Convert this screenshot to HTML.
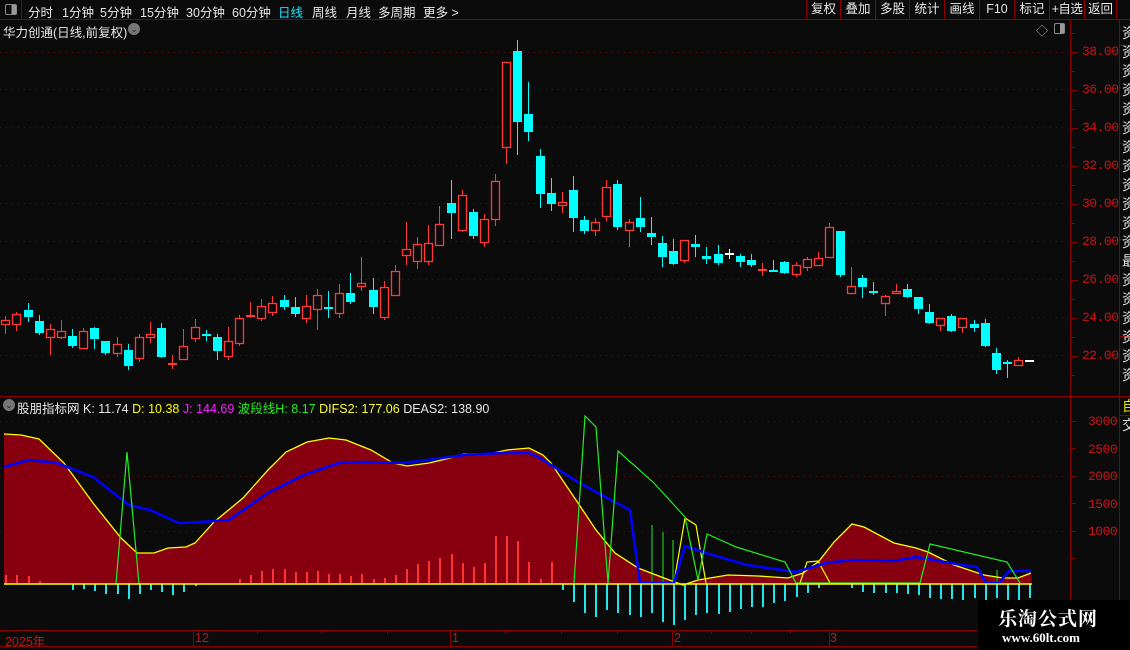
<!DOCTYPE html>
<html><head><meta charset="utf-8"><style>
*{margin:0;padding:0;box-sizing:border-box}
body{width:1130px;height:650px;background:#0b0b0b;overflow:hidden;position:relative;font-family:"Liberation Sans","Noto Sans CJK SC",sans-serif;font-size:12px;color:#e6e6e6}
.a{position:absolute;white-space:nowrap}
#top{position:absolute;left:0;top:0;width:1130px;height:20px;border-bottom:1px solid #8a0000}
.m{position:absolute;top:2px;font-size:12.5px;color:#e8e8e8;white-space:nowrap}
.b{position:absolute;top:0;height:19px;border-left:1px solid #8a0000;font-size:12.5px;color:#e8e8e8;text-align:center;line-height:19px;white-space:nowrap;overflow:hidden}
.yl{position:absolute;left:1082px;color:#c81418;font-size:13px;font-family:"Liberation Mono",monospace;letter-spacing:-0.5px}
.rc{position:absolute;left:1122px;width:8px;color:#e0e0e0;font-size:14px;line-height:19px;overflow:hidden;word-break:break-all}
</style></head><body>
<div id="top">
 <div class="a" style="left:0;top:0;width:22px;height:20px;border-right:1px solid #8a0000"></div>
 <div class="a" style="left:5px;top:4px;width:12px;height:11px;border:1px solid #888;border-radius:2px;background:linear-gradient(90deg,#0b0b0b 55%,#999 55%)"></div>
 <span class="m" style="left:28px">分时</span>
 <span class="m" style="left:62px">1分钟</span>
 <span class="m" style="left:100px">5分钟</span>
 <span class="m" style="left:140px">15分钟</span>
 <span class="m" style="left:186px">30分钟</span>
 <span class="m" style="left:232px">60分钟</span>
 <span class="m" style="left:278px;color:#19e6ff">日线</span>
 <span class="m" style="left:312px">周线</span>
 <span class="m" style="left:346px">月线</span>
 <span class="m" style="left:378px">多周期</span>
 <span class="m" style="left:423px">更多 &gt;</span>
 <div class="b" style="left:806px;width:34px">复权</div>
 <div class="b" style="left:840px;width:35px">叠加</div>
 <div class="b" style="left:875px;width:34px">多股</div>
 <div class="b" style="left:909px;width:35px">统计</div>
 <div class="b" style="left:944px;width:35px">画线</div>
 <div class="b" style="left:979px;width:35px">F10</div>
 <div class="b" style="left:1014px;width:35px">标记</div>
 <div class="b" style="left:1049px;width:35px;letter-spacing:-0.5px">+自选</div>
 <div class="b" style="left:1084px;width:33px;border-right:1px solid #8a0000">返回</div>
</div>
<div class="a" style="left:3px;top:22px;font-size:12.5px">华力创通(日线,前复权)</div>
<div class="a" style="left:128px;top:23px;width:12px;height:12px;border-radius:50%;background:#777;color:#222;font-size:9px;line-height:12px;text-align:center">⌄</div>
<div class="a" style="left:1036px;top:22px;color:#aaa;font-size:12px">◇</div>
<div class="a" style="left:1054px;top:23px;width:11px;height:11px;border:1px solid #888;border-radius:2px;background:linear-gradient(90deg,#0b0b0b 55%,#999 55%)"></div>

<div class="a" style="left:3px;top:399px;width:12px;height:12px;border-radius:50%;background:#777;color:#222;font-size:9px;line-height:12px;text-align:center">⌄</div>
<div class="a" style="left:17px;top:398px;font-size:12.5px"><span>股朋指标网</span> <span>K: 11.74</span> <span style="color:#ffff00">D: 10.38</span> <span style="color:#ff22ff">J: 144.69</span> <span style="color:#22ee22">波段线H: 8.17</span> <span style="color:#ffff33">DIFS2: 177.06</span> <span>DEAS2: 138.90</span></div>

<svg class="a" style="left:0;top:0" width="1130" height="650" id="g">
 <g stroke="#5a0a0a" stroke-dasharray="1,5" stroke-width="1" id="grid"></g>
 <line x1="1070.5" y1="20" x2="1070.5" y2="650" stroke="#8a0000"/>
 <line x1="1119.5" y1="20" x2="1119.5" y2="650" stroke="#8a0000"/>
 <g stroke="#8a0000"><line x1="1120" y1="45.5" x2="1130" y2="45.5"/><line x1="1120" y1="143.5" x2="1130" y2="143.5"/><line x1="1120" y1="239.5" x2="1130" y2="239.5"/><line x1="1120" y1="336.5" x2="1130" y2="336.5"/><line x1="1120" y1="415.5" x2="1130" y2="415.5"/></g>
 <line x1="0" y1="396.5" x2="1130" y2="396.5" stroke="#8a0000"/>
 <line x1="0" y1="630.5" x2="1119" y2="630.5" stroke="#8a0000"/>
 <line x1="0" y1="646.5" x2="1119" y2="646.5" stroke="#8a0000"/>
 <g id="ticks" stroke="#8a0000"></g>
 <polygon id="fill" fill="#880010"/>
 <g id="bars"></g>
 <polyline id="yel" fill="none" stroke="#ffff00" stroke-width="1.3"/>
 <polyline fill="none" stroke="#ffff00" stroke-width="1.2" points="674,582 685,518 696,525 706,583"/>
 <polyline fill="none" stroke="#ffff00" stroke-width="1.2" points="800,583 807,562 818,561 830,583"/>
 <polyline id="blue" fill="none" stroke="#0000ff" stroke-width="2.6"/>
 <polyline id="grn" fill="none" stroke="#22ee22" stroke-width="1.2"/>
 <polyline fill="none" stroke="#22ee22" stroke-width="1.2" points="116,584 127,452 139,584"/>
 <line x1="4" y1="584" x2="1032" y2="584" stroke="#ffff00" stroke-width="1.6"/>
 <g id="cdl"></g>
</svg>
<div id="yls"></div>
<div class="a" style="left:5px;top:631px;color:#c81418;font-size:12.5px">2025年</div>
<div class="a" style="left:195px;top:631px;color:#c81418;font-size:12.5px">12</div>
<div class="a" style="left:452px;top:631px;color:#c81418;font-size:12.5px">1</div>
<div class="a" style="left:674px;top:631px;color:#c81418;font-size:12.5px">2</div>
<div class="a" style="left:830px;top:631px;color:#c81418;font-size:12.5px">3</div>
<div class="rc" style="top:24px;height:360px">资资资资资资资资资资资资最资资资资资资资资资</div>
<div class="rc" style="top:397px;color:#e6e600">自</div>
<div class="rc" style="top:416px">交</div>
<div class="a" style="left:978px;top:600px;width:152px;height:50px;background:#000"></div>
<div class="a" style="left:998px;top:604px;color:#fff;font-family:'Noto Serif CJK SC','Liberation Serif',serif;font-weight:bold;font-size:19px;letter-spacing:1px">乐淘公式网</div>
<div class="a" style="left:1002px;top:630px;color:#fff;font-family:'Liberation Serif',serif;font-weight:bold;font-size:13px">www.60lt.com</div>
<script>
var NS="http://www.w3.org/2000/svg";
function el(p,t,a){var e=document.createElementNS(NS,t);for(var k in a)e.setAttribute(k,a[k]);p.appendChild(e);return e;}
var grid=document.getElementById('grid');
[52,89,127,165,203,241,279,317,355,421,476,531].forEach(function(y){el(grid,'line',{x1:0,y1:y+.5,x2:1066,y2:y+.5});});
var ticks=document.getElementById('ticks');
for(var y=33;y<390;y+=19){el(ticks,'line',{x1:1070,y1:y+.5,x2:(Math.abs((y-52)%38)<1?1078:1075),y2:y+.5});}
[421,448,476,503,531,558].forEach(function(y){el(ticks,'line',{x1:1070,y1:y+.5,x2:1076,y2:y+.5});});
[193,450,672,829].forEach(function(x){el(ticks,'line',{x1:x+.5,y1:630,x2:x+.5,y2:646});});
[257,322,387,506,561,617,711,751,790].forEach(function(x){el(ticks,'line',{x1:x+.5,y1:630,x2:x+.5,y2:634});});
var yls=document.getElementById('yls'),h='';
['38.00','36.00','34.00','32.00','30.00','28.00','26.00','24.00','22.00'].forEach(function(t,i){h+='<div class="yl" style="top:'+(44+i*38)+'px">'+t+'</div>';});
['3000','2500','2000','1500','1000'].forEach(function(t,i){h+='<div class="yl" style="left:1088px;top:'+(414+i*27.5)+'px">'+t+'</div>';});
yls.innerHTML=h;
var yel="4,434 21,435 39,439 64,463 93,503 121,538 137,553 154,553 168,548 186,547 195,543 214,522 243,498 268,470 286,452 307,442 329,438 346,440 371,450 393,463 407,466 429,463 450,458 464,454 489,454 507,450 529,448 543,455 551,463 578,503 596,530 615,553 638,568 664,578 683,585 698,580 728,575 758,576 788,578 803,573 819,561 834,542 852,524 864,527 894,543 916,548 928,552 954,565 984,575 1003,578 1018,578 1031,573";
document.getElementById('yel').setAttribute('points',yel);
document.getElementById('fill').setAttribute('points',"4,584 "+yel+" 1031,584");
document.getElementById('blue').setAttribute('points',"4,467 29,460 57,463 93,477 129,505 150,510 179,523 200,522 229,520 268,493 304,475 339,463 364,462 404,463 464,455 500,453 529,453 540,458 578,482 596,492 630,510 640,583 674,583 685,546 706,553 747,565 796,572 826,563 852,560 894,561 916,557 962,565 977,567 986,583 999,583 1009,571 1031,571");
document.getElementById('grn').setAttribute('points',"574,583 585,416 596,427 608,583 618,451 653,482 685,517 698,580 707,534 736,547 785,562 796,583 920,583 930,544 1007,562 1020,583");
function X(i){return 5.3+11.13*i;}
var bars=document.getElementById('bars');
function bar(i,y,c){var x=Math.round(X(i));el(bars,'rect',{x:x,y:Math.min(y,584),width:2,height:Math.abs(584-y),fill:c});}
[575,575,576,581].forEach(function(y,i){bar(i,y,'#ff3333');});
[579,575,571,569,569,572,572,571,574,574,576,574,579,578,575,569,564,561,558,554,563,567,563,536,536,541,562,579,562].forEach(function(y,i){bar(21+i,y,'#ff3333');});
[590,589,591,594,594,599,594,590,592,595,592,586].forEach(function(y,i){bar(6+i,y,'#22e6ee');});
[590,602,613,617,610,613,615,617,613,622,625,620,615,613,614,612,609,607,607,603,601,597,593,588].forEach(function(y,i){bar(50+i,y,'#22e6ee');});
[588,592,593,593,593,594,595,598,599,599,600,598,600,598,600,600,598].forEach(function(y,i){bar(76+i,y,'#22e6ee');});
[[651,525],[662,532],[672,540],[996,570]].forEach(function(p){el(bars,'rect',{x:p[0],y:p[1],width:2,height:584-p[1],fill:'#1a7a1a'});});
var D=[
['r',320,324,316,333],['r',314,324,312,330],['c',310,317,303,321],['c',321,333,315,334],['r',329,337,324,354],['r',331,337,320,338],['c',336,346,329,347],['r',331,348,328,348],['c',328,339,327,348],['c',341,353,341,354],
['r',344,353,337,356],['c',350,366,344,369],['r',337,358,334,361],['r',334,337,322,342],['c',328,357,323,357],['r',363,363,355,368],['r',346,359,329,359],['r',327,338,319,341],['c',334,334,330,340],['c',337,351,334,359],
['r',341,356,327,359],['r',318,343,315,345],['r',315,315,302,317],['r',306,318,299,320],['r',303,312,296,315],['c',300,307,295,309],['c',307,314,297,316],['r',306,318,295,322],['r',295,309,289,329],['c',307,307,291,317],
['r',293,313,284,317],['c',293,302,273,303],['r',283,286,257,290],['c',290,307,278,313],['r',287,317,281,319],['r',271,295,265,295],['r',249,255,222,264],['r',244,261,237,268],['r',243,261,225,264],['r',224,245,206,245],
['c',203,213,180,238],['r',195,230,190,231],['c',212,236,209,238],['r',219,242,214,246],['r',181,219,174,225],['r',62,147,62,163],['c',51,122,40,154],['c',114,132,82,140],['c',156,194,149,207],['c',193,204,178,210],
['r',202,205,192,212],['c',190,218,176,231],['c',220,231,216,233],['r',222,230,218,235],['r',187,216,180,220],['c',184,227,180,229],['r',222,230,219,246],['c',218,227,197,231],['c',233,237,217,244],['c',243,257,236,266],
['c',251,264,239,264],['r',240,260,240,262],['c',244,247,235,256],['c',256,259,247,263],['c',254,263,245,264],['w',253,253,249,258],['c',256,262,254,266],['c',260,265,254,266],['r',269,269,263,275],['c',270,271,260,271],
['c',262,273,261,273],['r',265,274,262,276],['r',259,267,257,270],['r',258,265,252,265],['r',227,257,223,257],['c',231,275,231,276],['r',286,293,267,293],['c',278,287,275,297],['c',291,293,282,294],['r',296,303,295,315],
['r',291,293,284,293],['c',289,297,284,297],['c',297,309,297,313],['c',312,323,304,323],['r',318,325,318,330],['c',316,331,314,331],['r',318,327,318,332],['c',324,328,320,331],['c',323,346,319,346],['c',353,370,348,373],
['c',362,364,360,377],['r',360,365,357,365],['w',360,360,360,360]];
var cd=document.getElementById('cdl');
D.forEach(function(d,i){var x=Math.round(X(i));var col=d[0]=='r'?'#ff3838':(d[0]=='c'?'#00ffff':'#ffffff');
 el(cd,'line',{x1:x+.5,y1:d[3],x2:x+.5,y2:d[4]+1,stroke:col,'stroke-width':1});
 var hgt=d[2]-d[1];
 if(hgt<2){el(cd,'rect',{x:x-4,y:d[1],width:9,height:2,fill:col});}
 else if(d[0]=='r'){el(cd,'rect',{x:x-3.5,y:d[1]+.5,width:8,height:hgt,fill:'#0b0b0b',stroke:col,'stroke-width':1.3});}
 else{el(cd,'rect',{x:x-4,y:d[1],width:9,height:hgt,fill:col});}
});
</script>
</body></html>
